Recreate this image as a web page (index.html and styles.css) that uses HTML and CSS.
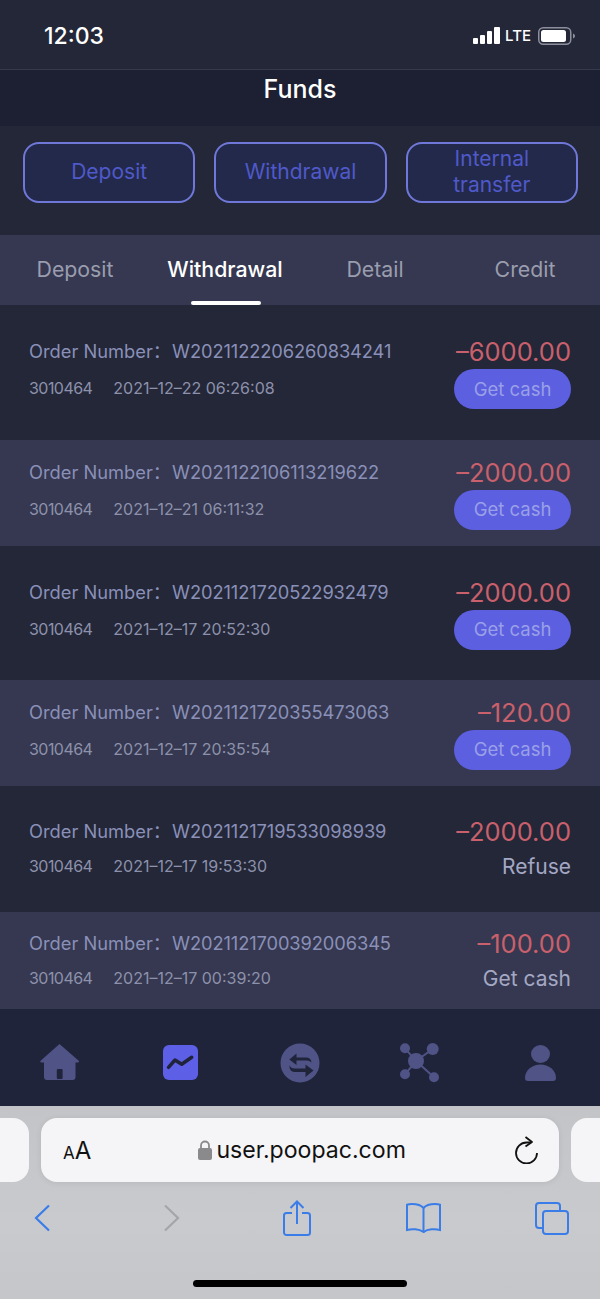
FILE: index.html
```html
<!DOCTYPE html>
<html lang="en">
<head>
    <meta charset="UTF-8">
    <meta name="viewport" content="width=device-width, initial-scale=1.0">
    <title>Funds</title>
    <link rel="stylesheet" href="styles.css">
</head>
<body>
    <div class="status-bar">
        <span class="time">12:03</span>
        <div class="status-icons">
            <svg class="signal" width="27" height="17" viewBox="0 0 27 17" fill="#fff">
                <rect x="0" y="11" width="5" height="6" rx="1"/>
                <rect x="7" y="8" width="5" height="9" rx="1"/>
                <rect x="14" y="4" width="5" height="13" rx="1"/>
                <rect x="21" y="0" width="6" height="17" rx="1"/>
            </svg>
            <span class="lte">LTE</span>
            <svg class="battery" width="37" height="18" viewBox="0 0 37 18">
                <rect x="0.75" y="0.75" width="32" height="16.5" rx="4.5" fill="none" stroke="#8d8f9c" stroke-width="1.5"/>
                <rect x="3" y="3" width="25" height="12" rx="2.5" fill="#fff"/>
                <path d="M35 6.5c1.2.4 2 1.4 2 2.5s-.8 2.100-2 2.500z" fill="#8d8f9c"/>
            </svg>
        </div>
    </div>

    <header class="page-title">Funds</header>

    <div class="actions">
        <button class="action-btn">Deposit</button>
        <button class="action-btn">Withdrawal</button>
        <button class="action-btn">Internal<br>transfer</button>
    </div>

    <nav class="tabs">
        <span class="tab">Deposit</span>
        <span class="tab active">Withdrawal</span>
        <span class="tab">Detail</span>
        <span class="tab">Credit</span>
    </nav>

    <div class="list">
        <div class="row">
            <div class="order">Order Number：<span class="order-no">W2021122206260834241</span></div>
            <div class="amount">–6000.00</div>
            <div class="meta"><span class="uid">3010464</span>2021–12–22 06:26:08</div>
            <button class="cash-btn">Get cash</button>
        </div>
        <div class="row alt">
            <div class="order">Order Number：<span class="order-no">W2021122106113219622</span></div>
            <div class="amount">–2000.00</div>
            <div class="meta"><span class="uid">3010464</span>2021–12–21 06:11:32</div>
            <button class="cash-btn">Get cash</button>
        </div>
        <div class="row">
            <div class="order">Order Number：<span class="order-no">W2021121720522932479</span></div>
            <div class="amount">–2000.00</div>
            <div class="meta"><span class="uid">3010464</span>2021–12–17 20:52:30</div>
            <button class="cash-btn">Get cash</button>
        </div>
        <div class="row alt">
            <div class="order">Order Number：<span class="order-no">W2021121720355473063</span></div>
            <div class="amount">–120.00</div>
            <div class="meta"><span class="uid">3010464</span>2021–12–17 20:35:54</div>
            <button class="cash-btn">Get cash</button>
        </div>
        <div class="row settled">
            <div class="order">Order Number：<span class="order-no">W2021121719533098939</span></div>
            <div class="amount">–2000.00</div>
            <div class="meta"><span class="uid">3010464</span>2021–12–17 19:53:30</div>
            <div class="state">Refuse</div>
        </div>
        <div class="row alt settled">
            <div class="order">Order Number：<span class="order-no">W2021121700392006345</span></div>
            <div class="amount">–100.00</div>
            <div class="meta"><span class="uid">3010464</span>2021–12–17 00:39:20</div>
            <div class="state">Get cash</div>
        </div>
    </div>

    <nav class="bottom-nav">
        <svg width="40" height="37" viewBox="0 0 40 37" fill="#4f5386">
            <path d="M19.500 0 38.700 16.800c.7.700.3 1.700-.7 1.700H35.500V33a3 3 0 0 1-3 3H7a3 3 0 0 1-3-3V18.500H1.300c-1 0-1.400-1-.7-1.700z"/>
            <rect x="16.800" y="25" width="5.800" height="10" rx="1" fill="#20243a"/>
        </svg>
        <svg width="35" height="35" viewBox="0 0 35 35">
            <rect width="35" height="35" rx="6" fill="#5d60e6"/>
            <path d="M5.500 22.300 12 15l6.700 4.300 10-7" fill="none" stroke="#20243a" stroke-width="3.500" stroke-linecap="round" stroke-linejoin="round"/>
        </svg>
        <svg width="40" height="40" viewBox="0 0 40 40">
            <circle cx="20" cy="20" r="19.500" fill="#4f5386"/>
            <path d="M9.300 16.500 16.500 10.500V14.500H26Q31 14.500 31.500 19.500 29 17 26 17.500H16.500V22z" fill="#20243a"/>
            <path d="M33.500 27.500 25.500 21.500V25.500H15Q10.500 25.500 9.500 22 9 28 14 29H25.500V34z" fill="#20243a"/>
        </svg>
        <svg width="40" height="40" viewBox="0 0 40 40" fill="#4f5386">
            <path d="M5 5.300 16 18 32.700 6M5 31.300 16 18 34 34.300" fill="none" stroke="#4f5386" stroke-width="2"/>
            <circle cx="16" cy="18" r="8"/>
            <circle cx="5" cy="5.300" r="5"/>
            <circle cx="32.700" cy="6" r="6"/>
            <circle cx="5" cy="31.300" r="5"/>
            <circle cx="34" cy="34.300" r="5"/>
        </svg>
        <svg width="31" height="36" viewBox="0 0 31 36" fill="#4f5386">
            <ellipse cx="15.500" cy="9" rx="9.500" ry="9"/>
            <path d="M15.500 19.500C23.500 19.500 31 25 31 33c0 1.700-1 3-3 3H3c-2 0-3-1.300-3-3C0 25 7.500 19.500 15.500 19.500z"/>
        </svg>
    </nav>

    <div class="browser">
        <div class="url-row">
            <div class="peek left"></div>
            <div class="url-pill">
                <span class="text-size"><span class="small-a">A</span>A</span>
                <span class="address">
                    <svg width="14" height="20" viewBox="0 0 14 20">
                        <path d="M3 9V5.500a4 4 0 0 1 8 0V9" fill="none" stroke="#8a8a8d" stroke-width="1.800"/>
                        <rect y="8" width="14" height="12" rx="2" fill="#8a8a8d"/>
                    </svg>
                    user.poopac.com
                </span>
                <svg class="reload" width="24" height="28" viewBox="0 0 24 28" fill="none" stroke="#111" stroke-width="1.800">
                    <path d="M16 6.500H11.500A10.500 10.500 0 1 0 22 17"/>
                    <path d="M10.500 1 17 6l-6.500 4.500" stroke-linejoin="round"/>
                </svg>
            </div>
            <div class="peek right"></div>
        </div>
        <div class="toolbar">
            <svg class="tool-back" width="16" height="28" viewBox="0 0 16 28" fill="none" stroke="#3b7de8" stroke-width="2.200">
                <path d="M15 1.500 2 14l13 12.500"/>
            </svg>
            <svg class="tool-forward" width="16" height="28" viewBox="0 0 16 28" fill="none" stroke="#a4a5a9" stroke-width="2.200">
                <path d="M1 1.500 14 14 1 26.500"/>
            </svg>
            <svg class="tool-share" width="28" height="36" viewBox="0 0 28 36" fill="none" stroke="#3b7de8" stroke-width="2">
                <path d="M14 24V2M7.500 8 14 1.500 20.500 8"/>
                <path d="M9 13H3.500A2.500 2.500 0 0 0 1 15.500V32.500A2.500 2.500 0 0 0 3.500 35h21A2.500 2.500 0 0 0 27 32.500V15.500A2.500 2.500 0 0 0 24.500 13H19"/>
            </svg>
            <svg class="tool-book" width="35" height="30" viewBox="0 0 35 30" fill="none" stroke="#3b7de8" stroke-width="2">
                <path d="M17.500 5C15 2 11 1 6 1 4 1 2 1.300 1 1.700V27c5-1.500 12-1 16.500 2V5z"/>
                <path d="M17.500 5C20 2 24 1 29 1c2 0 4 .3 5 .7V27c-5-1.500-12-1-16.500 2"/>
            </svg>
            <svg class="tool-tabs" width="34" height="33" viewBox="0 0 34 33" fill="none" stroke="#3b7de8" stroke-width="2">
                <path d="M7 26H4a3 3 0 0 1-3-3V4a3 3 0 0 1 3-3h18a3 3 0 0 1 3 3v5"/>
                <rect x="8" y="9" width="25" height="23" rx="3"/>
            </svg>
        </div>
        <div class="home-indicator"></div>
    </div>
</body>
</html>
```

FILE: styles.css
```css
* {
    box-sizing: border-box;
}
body {
    margin: 0;
    width: 600px;
    height: 1299px;
    overflow: hidden;
    font-family: Inter, "Noto Sans CJK SC", sans-serif;
    background-color: #232738;
}
button {
    font-family: inherit;
    cursor: pointer;
}

.status-bar {
    height: 70px;
    padding: 0 25px 0 44px;
    display: flex;
    align-items: center;
    justify-content: space-between;
    background-color: #232738;
    border-bottom: 1px solid #373a4b;
}
.time {
    color: #fff;
    font-size: 23px;
    font-weight: 500;
    margin-top: 2px;
}
.status-icons {
    display: flex;
    align-items: center;
    margin-top: 2px;
}
.lte {
    color: #fff;
    font-size: 15px;
    font-weight: 500;
    margin: 0 7px 0 5px;
}

.page-title {
    height: 56px;
    padding-bottom: 18px;
    display: flex;
    align-items: center;
    justify-content: center;
    color: #fff;
    font-size: 25px;
    font-weight: 500;
    background-color: #1c2032;
}

.actions {
    height: 109px;
    padding: 16px 22px 0 23px;
    display: flex;
    gap: 19px;
    background-color: #232738;
}
.action-btn {
    flex: 1;
    height: 61px;
    padding: 0 0 1px;
    color: #4f59c9;
    font-size: 21px;
    line-height: 26px;
    background-color: #23294a;
    border: 2px solid #6f78d8;
    border-radius: 16px;
}

.tabs {
    height: 70px;
    display: grid;
    grid-template-columns: repeat(4, 1fr);
    background-color: #353850;
}
.tab {
    display: flex;
    align-items: center;
    justify-content: center;
    position: relative;
    padding-bottom: 2px;
    color: #9a9dae;
    font-size: 21.300px;
}
.tab.active {
    color: #fff;
    font-weight: 500;
}
.tab.active::after {
    content: "";
    position: absolute;
    left: 41px;
    bottom: 0;
    width: 70px;
    height: 4px;
    border-radius: 2px;
    background-color: #fff;
}

.list {
    display: grid;
    grid-template-rows: 135px 106px 134px 106px 126px 97px;
}
.row {
    padding: 0 29px 1px;
    display: grid;
    grid-template-columns: 1fr auto;
    align-content: center;
    align-items: center;
    row-gap: 2px;
    background-color: #232738;
}
.row.alt {
    background-color: #353850;
}
.row:last-child {
    padding-top: 2px;
}
.order {
    height: 32px;
    line-height: 32px;
    color: #8a90b8;
    font-size: 18.300px;
    white-space: nowrap;
}
.order-no {
    margin-left: 1px;
    letter-spacing: -0.1px;
}
.amount {
    height: 32px;
    line-height: 34px;
    text-align: right;
    color: #c9606b;
    font-size: 25.500px;
}
.meta {
    padding-bottom: 2px;
    color: #8d91ab;
    font-size: 16px;
    white-space: nowrap;
}
.settled .meta {
    padding-bottom: 0;
}
.uid {
    margin-right: 21px;
    letter-spacing: -0.55px;
}
.cash-btn {
    width: 117px;
    height: 40px;
    padding: 0 0 1px;
    color: #9aa0e8;
    font-size: 18.500px;
    background-color: #5c5fe0;
    border: none;
    border-radius: 20px;
}
.state {
    height: 34px;
    line-height: 36px;
    text-align: right;
    color: #a4a8c4;
    font-size: 21px;
}

.bottom-nav {
    height: 97px;
    display: grid;
    grid-template-columns: repeat(5, 1fr);
    align-items: center;
    justify-items: center;
    padding-top: 10px;
    background-color: #20243a;
}

.browser {
    height: 193px;
    padding-top: 12px;
    background: linear-gradient(#c3c4c8, #c9cacd 60%, #c5c6ca);
}
.url-row {
    display: flex;
    gap: 12px;
}
.peek {
    width: 29px;
    height: 64px;
    background-color: #f5f5f7;
}
.peek.left {
    border-radius: 0 16px 16px 0;
}
.peek.right {
    border-radius: 16px 0 0 16px;
}
.url-pill {
    flex: 1;
    height: 64px;
    padding: 0 20px 0 22px;
    display: flex;
    align-items: center;
    justify-content: space-between;
    background-color: #f5f5f7;
    border-radius: 16px;
    box-shadow: 0 1px 6px rgba(0, 0, 0, 0.08);
}
.text-size {
    color: #111;
    font-size: 24px;
}
.small-a {
    font-size: 17px;
}
.address {
    display: flex;
    align-items: center;
    gap: 4px;
    color: #111;
    font-size: 23.100px;
    margin-left: -2px;
}

.toolbar {
    height: 72px;
    padding-left: 34px;
    display: flex;
    align-items: center;
}
.tool-forward {
    margin-left: 114px;
}
.tool-share {
    margin-left: 103px;
}
.tool-book {
    margin-left: 95px;
}
.tool-tabs {
    margin-left: 94px;
}
.home-indicator {
    width: 214px;
    height: 7px;
    margin: 26px auto 0;
    border-radius: 4px;
    background-color: #000;
}
```
